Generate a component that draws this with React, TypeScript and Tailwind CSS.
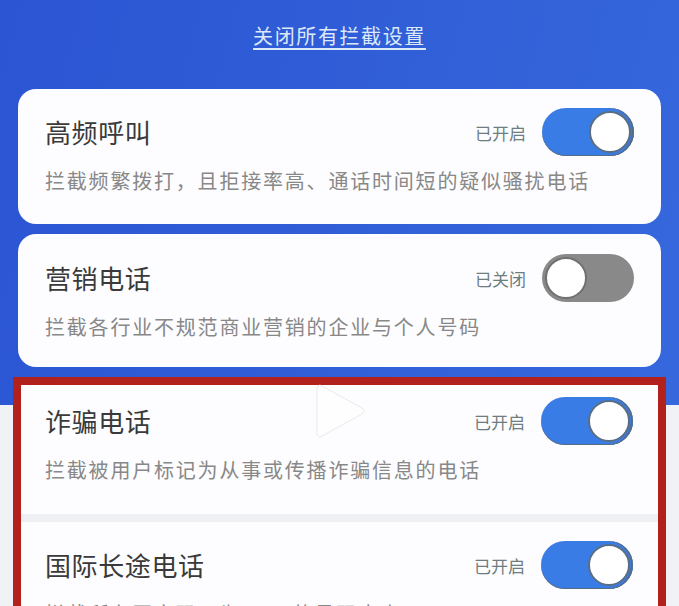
import React from 'react'

type Rule = {
  title: string
  desc: string
  on: boolean
}

const rules: Rule[] = [
  { title: '高频呼叫', desc: '拦截频繁拨打，且拒接率高、通话时间短的疑似骚扰电话', on: true },
  { title: '营销电话', desc: '拦截各行业不规范商业营销的企业与个人号码', on: false },
  { title: '诈骗电话', desc: '拦截被用户标记为从事或传播诈骗信息的电话', on: true },
  { title: '国际长途电话', desc: '拦截所有国家码不为0086的号码来电', on: true },
]

const font = { fontFamily: '"Noto Sans CJK SC", "Noto Sans", sans-serif' }

function Toggle({ on }: { on: boolean }) {
  return (
    <div
      className={`flex h-[48px] w-[92px] shrink-0 items-center rounded-full px-[3px] ${
        on
          ? 'justify-end bg-[#3a7ce6] shadow-[inset_-2px_0_0_#566d86,inset_0_-1px_0_#566d86]'
          : 'justify-start bg-[#898989]'
      }`}
    >
      <div
        className={`h-[42px] w-[42px] rounded-full border-[2.5px] bg-white ${
          on ? 'border-[#5a6e83]' : 'border-[#707070]'
        }`}
      />
    </div>
  )
}

function RuleCard({ rule, className }: { rule: Rule; className: string }) {
  return (
    <div className={`bg-[#fdfdff] ${className}`}>
      <div className="flex h-[48px] items-center">
        <span className="text-[26px] leading-none tracking-[0.6px] text-[#3a3a3a]">{rule.title}</span>
        <span className="ml-auto mr-[16px] text-[17px] leading-none text-[#6e7d7f]">
          {rule.on ? '已开启' : '已关闭'}
        </span>
        <Toggle on={rule.on} />
      </div>
      <p className="mt-[10px] whitespace-nowrap text-[20px] leading-[30px] tracking-[1.8px] text-[#888888]">
        {rule.desc}
      </p>
    </div>
  )
}

export default function App() {
  return (
    <div
      className="relative h-[606px] w-[679px] overflow-hidden bg-[linear-gradient(to_bottom,transparent_405px,#f1f2f6_405px),linear-gradient(105deg,#2b55d3,#3769dd)]"
      style={font}
    >
      {/* header action */}
      <div className="flex h-[89px] justify-center pt-[22px]">
        <span className="text-[20px] leading-[28px] tracking-[1.6px] text-[#dce9f8] underline decoration-[1.5px] underline-offset-[4px]">
          关闭所有拦截设置
        </span>
      </div>

      <div className="flex flex-col gap-[10px] px-[18px]">
        <RuleCard rule={rules[0]} className="h-[135px] rounded-[18px] px-[27px] pt-[19px]" />
        <RuleCard rule={rules[1]} className="h-[133px] rounded-[18px] px-[27px] pt-[20px]" />
      </div>

      {/* highlighted group */}
      <div className="ml-[13px] mt-[10px] w-[653px] border-[8px] border-b-0 border-[#b3211d] bg-[#eef0f3]">
        <RuleCard rule={rules[2]} className="h-[129px] pl-[24px] pr-[25px] pt-[12px]" />
        <RuleCard rule={rules[3]} className="mt-[8px] h-[120px] pl-[24px] pr-[25px] pt-[19px]" />
      </div>

      {/* play watermark */}
      <svg
        className="absolute left-[316px] top-[382px]"
        width="50"
        height="58"
        viewBox="0 0 50 58"
      >
        <path
          d="M6 4 C3 2 1 4 1 7 L1 51 C1 54 3 56 6 54 L46 32 C49 30 49 28 46 26 Z"
          fill="#ffffff"
          fillOpacity="0.55"
          stroke="#e9e9ec"
          strokeWidth="1"
        />
      </svg>
    </div>
  )
}
